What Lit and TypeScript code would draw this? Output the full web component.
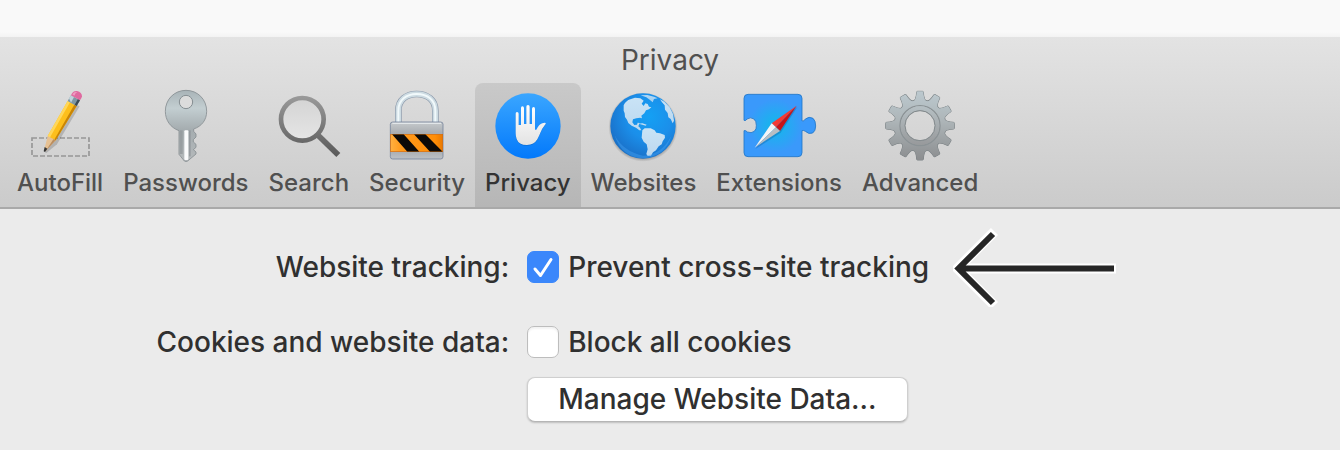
import { LitElement, html, svg, css } from "lit";
import { customElement, state } from "lit/decorators.js";

const GEAR_TEETH = Array.from({ length: 12 }, (_, i) => i * 30);

const icons: Record<string, unknown> = {
  autofill: svg`
    <svg class="icon" viewBox="66 24 228 228" aria-hidden="true">
      <rect x="96" y="174" width="171" height="54" fill="none" stroke="#979797" stroke-width="5" stroke-dasharray="15 6"/>
      <path d="M204 60 L236 76 L168 190 L136 216 L132 214 L143 168 Z" fill="#000" opacity=".16" transform="translate(3 3)"/>
      <path d="M143 168 L203 63 L230 78 L167 181 L155 190 Z" fill="#fdbf1c"/>
      <path d="M143 168 L203 63 L210 67 L149 174 Z" fill="#ffd75a"/>
      <path d="M161 182 L223 74 L230 78 L167 181 Z" fill="#c98506"/>
      <path d="M143 168 L167 181 L137 213 L132 212 Z" fill="#e6c193"/>
      <path d="M160 178 L167 181 L137 213 Z" fill="#b98d60"/>
      <path d="M134 201 L142 206 L135 216 L131 214 Z" fill="#353535"/>
      <path d="M203 63 L213 46 L240 61 L230 78 Z" fill="#7e98a3"/>
      <path d="M207 55 L213 46 L222 51 L213 68 Z" fill="#bfd3dc"/>
      <path d="M224 74 L234 57 L240 61 L230 78 Z" fill="#3c4c55"/>
      <path d="M213 46 Q218 32 231 33 Q246 37 246 49 Q245 55 240 61 Z" fill="#df6aa0"/>
      <path d="M217 43 Q222 34 232 36 Q226 38 223 47 Z" fill="#f19bc2"/>
    </svg>`,
  passwords: svg`
    <svg class="icon" viewBox="441 24 228 228" aria-hidden="true">
      <defs>
        <linearGradient id="k1" x1="0" y1="0" x2="0" y2="1"><stop offset="0" stop-color="#a8b3b7"/><stop offset=".25" stop-color="#c3ced1"/><stop offset=".55" stop-color="#a5adb0"/><stop offset="1" stop-color="#b5b9bb"/></linearGradient>
      </defs>
      <path fill="url(#k1)" stroke="#878e91" stroke-width="2.5" d="M555 31 C590 31 617 58 617 94 C617 120 602 139 578 147 L578 154 L585 162 V171 L577 179 V186 L585 193 V202 L577 209 L585 216 V222 L560 243 Q555 246 550 243 L534 223 V152 C508 143 493 120 493 94 C493 58 520 31 555 31 Z"/>
      <circle cx="555" cy="66" r="20" fill="#dcdcdc" stroke="#858e92" stroke-width="3"/>
      <rect x="550" y="151" width="12" height="89" rx="3" fill="#fafbfc"/>
      <rect x="537" y="151" width="8" height="71" fill="#8d9396" opacity=".65"/>
      <rect x="564" y="151" width="5" height="78" fill="#868b8f" opacity=".6"/>
    </svg>`,
  search: svg`
    <svg class="icon" viewBox="58 24 228 228" aria-hidden="true">
      <defs>
        <linearGradient id="s1" gradientUnits="userSpaceOnUse" x1="0" y1="45" x2="0" y2="230"><stop offset="0" stop-color="#9b9b9b"/><stop offset="1" stop-color="#595959"/></linearGradient>
        <linearGradient id="s2" x1="0" y1="0" x2="0" y2="1"><stop offset="0" stop-color="#d4d4d4"/><stop offset="1" stop-color="#e5e5e5"/></linearGradient>
      </defs>
      <circle cx="152" cy="118" r="64" fill="url(#s2)" stroke="url(#s1)" stroke-width="14"/>
      <path d="M190 169 L202 157 L266 219 L254 231 Z" fill="url(#s1)"/>
    </svg>`,
  security: svg`
    <svg class="icon" viewBox="384 24 228 228" aria-hidden="true">
      <defs>
        <linearGradient id="l1" x1="0" y1="0" x2="0" y2="1"><stop offset="0" stop-color="#c6cacd"/><stop offset=".3" stop-color="#a9adb1"/><stop offset=".75" stop-color="#a6aaae"/><stop offset="1" stop-color="#bcc1c6"/></linearGradient>
        <linearGradient id="l2" x1="0" y1="0" x2="1" y2="0"><stop offset="0" stop-color="#ffb040"/><stop offset=".2" stop-color="#ff9a1c"/><stop offset=".85" stop-color="#ff8e08"/><stop offset="1" stop-color="#e97900"/></linearGradient>
        <clipPath id="l3"><rect x="419" y="163" width="156" height="52"/></clipPath>
      </defs>
      <path d="M442 128 V92 C442 60 466 42 497 42 C529 42 553 60 553 92 V128" fill="none" stroke="#8b99ab" stroke-width="20"/>
      <path d="M442 128 V92 C442 60 466 42 497 42 C529 42 553 60 553 92 V128" fill="none" stroke="#cddbe2" stroke-width="16"/>
      <path d="M442 128 V92 C442 60 466 42 497 42 C529 42 553 60 553 92 V128" fill="none" stroke="#f1f9fb" stroke-width="6"/>
      <rect x="418" y="126" width="158" height="111" rx="7" fill="url(#l1)" stroke="#77869c" stroke-width="2.5"/>
      <path d="M424 130 H570" stroke="#e9edf0" stroke-width="3"/>
      <rect x="419" y="163" width="156" height="52" fill="url(#l2)" stroke="#d86a05" stroke-width="2"/>
      <g clip-path="url(#l3)"><path d="M423 163 H458 L505 215 H469 Z M489 163 H523 L575 215 H537 Z" fill="#0c0a08"/></g>
    </svg>`,
  privacy: svg`
    <svg class="icon" viewBox="58 24 228 228" aria-hidden="true">
      <defs>
        <linearGradient id="p1" x1="0" y1="0" x2="0" y2="1"><stop offset="0" stop-color="#3aa6ff"/><stop offset="1" stop-color="#0379fb"/></linearGradient>
        <linearGradient id="p2" x1="0" y1="0" x2="0" y2="1"><stop offset="0" stop-color="#fff"/><stop offset="1" stop-color="#e3e3e3"/></linearGradient>
      </defs>
      <circle cx="172" cy="138" r="98" fill="url(#p1)"/>
      <path d="M135 101 Q135 96 139 96 Q144 96 144 101 V135 H151 V84 Q151 79 155 79 Q160 79 160 84 V132 H167 V80 Q167 75 172 75 Q177 75 177 80 V132 H184 V86 Q184 81 189 81 Q193 81 193 86 V149 H197 Q205 133 215 130 Q222 127 225 129 Q227 131 221 137 C211 148 208 164 200 178 Q190 195 169 195 Q144 195 138 177 Q135 170 135 160 Z" fill="#07509e" opacity=".4" transform="translate(0 2)"/>
      <path d="M135 101 Q135 96 139 96 Q144 96 144 101 V135 H151 V84 Q151 79 155 79 Q160 79 160 84 V132 H167 V80 Q167 75 172 75 Q177 75 177 80 V132 H184 V86 Q184 81 189 81 Q193 81 193 86 V149 H197 Q205 133 215 130 Q222 127 225 129 Q227 131 221 137 C211 148 208 164 200 178 Q190 195 169 195 Q144 195 138 177 Q135 170 135 160 Z" fill="url(#p2)"/>
    </svg>`,
  websites: svg`
    <svg class="icon" viewBox="405 24 228 228" aria-hidden="true">
      <defs>
        <radialGradient id="g1" cx=".6" cy=".35" r=".7"><stop offset="0" stop-color="#14a0f4"/><stop offset=".5" stop-color="#1b8fea"/><stop offset=".85" stop-color="#1a77d0"/><stop offset="1" stop-color="#1a6dc0"/></radialGradient>
        <linearGradient id="g2" x1="0" y1="0" x2="0" y2="1"><stop offset="0" stop-color="#c9e3f6"/><stop offset="1" stop-color="#bcd8ef"/></linearGradient>
        <radialGradient id="g3"><stop offset=".88" stop-color="#000" stop-opacity=".3"/><stop offset="1" stop-color="#000" stop-opacity="0"/></radialGradient>
      </defs>
      <circle cx="519" cy="141" r="104" fill="url(#g3)"/>
      <circle cx="519" cy="138" r="98" fill="url(#g1)"/>
      <g transform="translate(405 24)" fill="url(#g2)">
        <path d="M56 52 Q63 38 76 34 L90 29 L106 31 L116 38 L110 47 L116 54 L121 46 L128 48 L132 56 L139 58 L132 64 L123 67 L118 76 L109 83 L111 91 L105 89 L94 91 L84 94 L82 103 L88 111 L96 110 L98 104 L104 105 L100 115 L105 119 L109 127 L103 127 L93 119 L80 113 L70 105 L66 95 L60 87 L59 76 L56 68 Z"/>
        <path d="M112 127 L119 121 L137 121 L149 127 L154 134 L165 136 L179 141 L180 149 L173 160 L170 169 L161 175 L153 187 L144 193 L138 203 L128 204 L124 198 L128 184 L125 169 L116 161 L110 149 Z"/>
        <path d="M165 34 L178 41 L194 58 L204 78 L207 98 L203 106 L197 93 L190 88 L188 75 L180 65 L179 52 L171 43 Z"/>
        <path d="M107 22 L127 21 L147 26 L158 31 L147 33 L143 43 L134 35 L124 28 Z" opacity=".85"/>
        <path d="M101 107 L112 106 L125 110 L122 113 L112 110 Z"/>
      </g>
      <path d="M434 166 Q460 215 519 227 Q576 224 604 167 Q587 229 519 235 Q454 232 434 166 Z" fill="#4fb0ff" opacity=".35"/>
    </svg>`,
  extensions: svg`
    <svg class="icon" viewBox="120 24 228 228" aria-hidden="true">
      <defs>
        <radialGradient id="e1" gradientUnits="userSpaceOnUse" cx="223" cy="138" r="80"><stop offset="0" stop-color="#11b9ea"/><stop offset="1" stop-color="#3a99fb"/></radialGradient>
      </defs>
      <path d="M141 43 H291 Q303 43 303 55 V123 Q309 125 313 117 Q324 108 336 115 Q344 122 344 138 Q344 153 335 159 Q323 164 313 154 Q308 150 303 152 V218 Q303 230 291 230 H141 Q129 230 129 218 V152 Q134 150 139 156 Q151 161 160 154 Q167 148 166 136 Q166 123 159 117 Q149 110 138 117 Q134 124 129 121 V55 Q129 43 141 43 Z" fill="url(#e1)" stroke="#2376c5" stroke-width="2.5"/>
      <path d="M287 77 L237 154 L161 203 L213 132 Z" fill="#075c9c" opacity=".35" transform="translate(2 4)"/>
      <path d="M287 77 L212 130 L225 142 Z" fill="#f33b35"/><path d="M287 77 L225 142 L237 153 Z" fill="#c81418"/>
      <path d="M161 203 L212 130 L225 142 Z" fill="#f4f5f7"/><path d="M161 203 L225 142 L237 153 Z" fill="#b7bec4"/>
    </svg>`,
  advanced: svg`
    <svg class="icon" viewBox="542 24 228 228" aria-hidden="true">
      <defs>
        <linearGradient id="a1" gradientUnits="userSpaceOnUse" x1="0" y1="32" x2="0" y2="242"><stop offset="0" stop-color="#bcc9cf"/><stop offset=".4" stop-color="#afb7ba"/><stop offset="1" stop-color="#8b8d8f"/></linearGradient>
        <linearGradient id="a2" gradientUnits="userSpaceOnUse" x1="0" y1="78" x2="0" y2="196"><stop offset="0" stop-color="#b6c0c4"/><stop offset="1" stop-color="#97999b"/></linearGradient>
        <mask id="a3"><rect x="542" y="24" width="228" height="228" fill="#000"/>
          ${GEAR_TEETH.map((a) => svg`<path d="M636 66 Q645 58 646 37 Q646 34 649 34 H663 Q666 34 666 37 Q667 58 676 66 Z" fill="#fff" transform="rotate(${a} 656 137)"/>`)}
          <circle cx="656" cy="137" r="77" fill="#fff"/>
          <circle cx="656" cy="137" r="46" fill="#000"/>
        </mask>
      </defs>
      ${GEAR_TEETH.map((a) => svg`<path d="M636 66 Q645 58 646 37 Q646 34 649 34 H663 Q666 34 666 37 Q667 58 676 66 Z" fill="#7b8285" stroke="#7b8285" stroke-width="3" transform="rotate(${a} 656 137)"/>`)}
      <circle cx="656" cy="137" r="62" fill="none" stroke="#7b8285" stroke-width="34"/>
      <rect x="542" y="24" width="228" height="228" fill="url(#a1)" mask="url(#a3)"/>
      <circle cx="656" cy="137" r="60" fill="none" stroke="#8b9295" stroke-width="4"/>
      <circle cx="656" cy="137" r="52" fill="none" stroke="url(#a2)" stroke-width="12"/>
      <circle cx="656" cy="137" r="45" fill="none" stroke="#838a8d" stroke-width="3"/>
    </svg>`,
};

const TABS = [
  ["autofill", "AutoFill"],
  ["passwords", "Passwords"],
  ["search", "Search"],
  ["security", "Security"],
  ["privacy", "Privacy"],
  ["websites", "Websites"],
  ["extensions", "Extensions"],
  ["advanced", "Advanced"],
];

@customElement("app-root")
export class AppRoot extends LitElement {
  @state() private selected = "privacy";

  static styles = css`
    :host {
      display: block;
      min-height: 100vh;
      box-sizing: border-box;
      padding-top: 37px;
      background: linear-gradient(#f9f9f9 0, #f9f9f9 32px, #f3f3f3 37px, #ebebeb 37px);
      font-family: Inter, "Liberation Sans", sans-serif;
      font-size: 28px;
      font-weight: 500;
      line-height: 32px;
      color: #303030;
    }
    .toolbar {
      background: linear-gradient(#e3e3e3, #cbcbcb);
      border-bottom: 2px solid #a9a9a9;
    }
    .title {
      margin: 0;
      padding: 7px 0;
      font-size: 28px;
      font-weight: 400;
      line-height: 32px;
      text-align: center;
      color: #505050;
    }
    .tabs {
      display: flex;
      padding-left: 7px;
    }
    .tab {
      display: flex;
      flex-direction: column;
      align-items: center;
      padding: 5px 10px 10px;
      border: 0;
      border-radius: 8px 8px 0 0;
      background: none;
      font: inherit;
      font-size: 24px;
      line-height: 28px;
      gap: 5px;
      color: #505050;
    }
    .tab.active {
      background: linear-gradient(#c9c9c9, #b6b6b6);
      color: #333;
    }
    .icon {
      display: block;
      width: 76px;
      height: 76px;
    }
    .form {
      display: grid;
      grid-template-columns: 38% 1fr;
      column-gap: 18px;
      row-gap: 19px;
      align-items: center;
      padding: 18px 0;
    }
    .name {
      text-align: right;
    }
    .field {
      display: flex;
      align-items: center;
    }
    .check {
      display: flex;
      align-items: center;
      gap: 9px;
    }
    .box {
      appearance: none;
      box-sizing: border-box;
      width: 32px;
      height: 32px;
      margin: 0;
      border: 1px solid #bdbdbd;
      border-radius: 7px;
      background: #fff;
      box-shadow: inset 0 2px 2px #0000000d;
    }
    .box:checked {
      border-color: #3b87fb;
      background: #3b87fb;
      box-shadow: none;
    }
    .mark {
      display: grid;
    }
    .mark > * {
      grid-area: 1 / 1;
    }
    .tick {
      width: 32px;
      height: 32px;
      pointer-events: none;
      visibility: hidden;
    }
    .box:checked + .tick {
      visibility: visible;
    }
    .arrow {
      width: 164px;
      height: 80px;
      margin-left: 24px;
    }
    .manage {
      grid-column: 2;
      justify-self: start;
      padding: 5px 30px 6px;
      border: 1px solid #cfcfcf;
      border-bottom-color: #b5b5b5;
      border-radius: 8px;
      background: #fff;
      box-shadow: 0 1px 2px #00000033;
      font: inherit;
      color: inherit;
    }
  `;

  render() {
    return html`
      <header class="toolbar">
        <h1 class="title">Privacy</h1>
        <nav class="tabs">
          ${TABS.map(
            ([id, label]) => html`
              <button class="tab ${id === this.selected ? "active" : ""}" @click=${() => (this.selected = id)}>
                ${icons[id]}<span>${label}</span>
              </button>`
          )}
        </nav>
      </header>
      <main class="form">
        <span class="name" id="tracking">Website tracking:</span>
        <div class="field">
          <label class="check">
            <span class="mark">
              <input class="box" type="checkbox" checked aria-describedby="tracking" />
              <svg class="tick" viewBox="0 0 32 32" aria-hidden="true">
                <path d="M8 18 L13.5 24.5 L24 8.5" fill="none" stroke="#fff" stroke-width="3" stroke-linecap="round" stroke-linejoin="round"/>
              </svg>
            </span>
            <span>Prevent cross-site tracking</span>
          </label>
          <svg class="arrow" viewBox="953 227 164 80" aria-hidden="true">
            <g fill="none" stroke-miterlimit="10">
              <path d="M1116 268.500 H960 M994.500 231.500 L957.500 268.500 L994.500 305.500" stroke="#fff" stroke-width="10"/>
              <path d="M1114 268.500 H960 M993 234 L958.500 268.500 L993 303" stroke="#262626" stroke-width="6"/>
            </g>
          </svg>
        </div>
        <span class="name" id="cookies">Cookies and website data:</span>
        <label class="check">
          <input class="box" type="checkbox" aria-describedby="cookies" />
          <span>Block all cookies</span>
        </label>
        <button class="manage">Manage Website Data...</button>
      </main>
    `;
  }
}
